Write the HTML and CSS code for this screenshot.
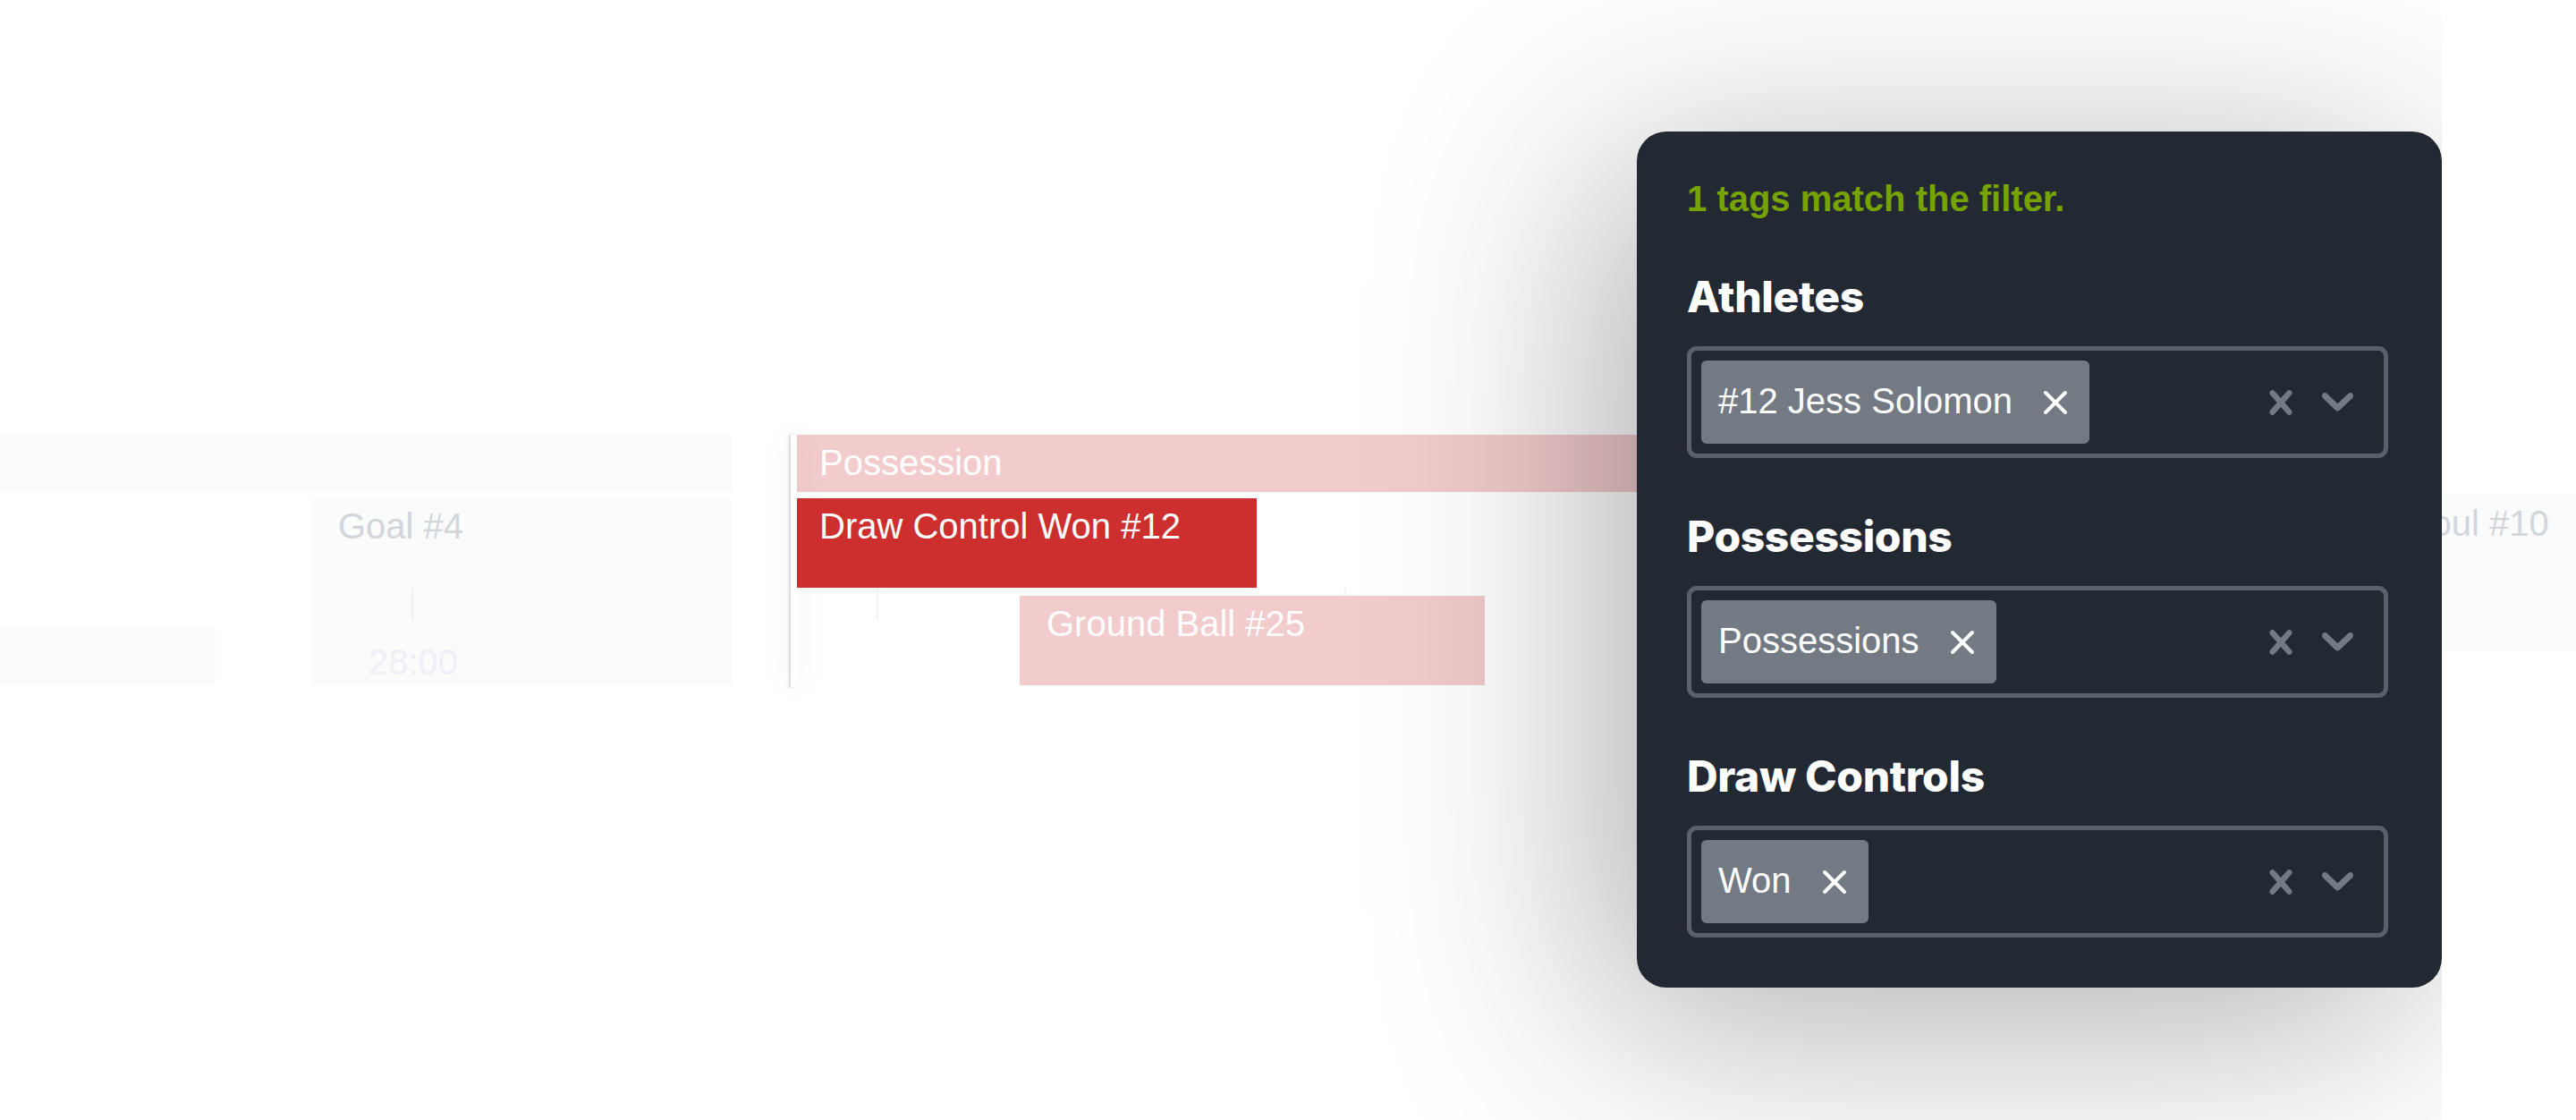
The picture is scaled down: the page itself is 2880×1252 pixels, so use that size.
FILE: index.html
```html
<!DOCTYPE html>
<html lang="en">
<head>
<meta charset="utf-8">
<title>Tag filter</title>
<link rel="stylesheet" href="styles.css">
</head>
<body>
<div class="stage">
  <div class="timeline">
    <div class="ev ghost row-top"></div>
    <div class="ev ghost goal"><span class="ghost-label">Goal #4</span></div>
    <div class="ev ghost low-left"></div>
    <div class="ev ghost foul"><span class="ghost-label">Foul #10</span></div>
    <div class="tick t1"></div>
    <div class="time-label">28:00</div>
    <div class="tick t2"></div>
    <div class="tick t3"></div>
    <div class="ev faded possession">Possession</div>
    <div class="ev active draw">Draw Control Won #12</div>
    <div class="ev faded ground">Ground Ball #25</div>
    <div class="playhead"></div>
  </div>

  <div class="panel">
    <p class="count">1 tags match the filter.</p>

    <section class="field">
      <h3 class="field-title">Athletes</h3>
      <div class="select">
        <div class="values">
          <span class="chip"><span class="chip-label">#12 Jess Solomon</span>
            <svg class="chip-x" viewBox="0 0 28 28" width="28" height="28"><path d="M3 3L25 25M25 3L3 25"/></svg>
          </span>
        </div>
        <div class="indicators">
          <svg class="clear" viewBox="5.3 4.8 9.4 10.4" width="26" height="28"><path d="M14.348 14.849c-0.469 0.469-1.229 0.469-1.697 0l-2.651-3.030-2.651 3.029c-0.469 0.469-1.229 0.469-1.697 0-0.469-0.469-0.469-1.229 0-1.697l2.758-3.15-2.759-3.152c-0.469-0.469-0.469-1.228 0-1.697s1.228-0.469 1.697 0l2.652 3.031 2.651-3.031c0.469-0.469 1.228-0.469 1.697 0s0.469 1.229 0 1.697l-2.758 3.152 2.758 3.15c0.469 0.469 0.469 1.229 0 1.698z"/></svg>
          <svg class="chev" viewBox="4.19 7.2 11.62 6.95" width="35" height="21"><path d="M4.516 7.548c0.436-0.446 1.043-0.481 1.576 0l3.908 3.747 3.908-3.747c0.533-0.481 1.141-0.446 1.574 0 0.436 0.445 0.408 1.197 0 1.615-0.406 0.418-4.695 4.502-4.695 4.502-0.217 0.223-0.502 0.335-0.787 0.335s-0.57-0.112-0.789-0.335c0 0-4.287-4.084-4.695-4.502s-0.436-1.170 0-1.615z"/></svg>
        </div>
      </div>
    </section>

    <section class="field">
      <h3 class="field-title">Possessions</h3>
      <div class="select">
        <div class="values">
          <span class="chip"><span class="chip-label">Possessions</span>
            <svg class="chip-x" viewBox="0 0 28 28" width="28" height="28"><path d="M3 3L25 25M25 3L3 25"/></svg>
          </span>
        </div>
        <div class="indicators">
          <svg class="clear" viewBox="5.3 4.8 9.4 10.4" width="26" height="28"><path d="M14.348 14.849c-0.469 0.469-1.229 0.469-1.697 0l-2.651-3.030-2.651 3.029c-0.469 0.469-1.229 0.469-1.697 0-0.469-0.469-0.469-1.229 0-1.697l2.758-3.15-2.759-3.152c-0.469-0.469-0.469-1.228 0-1.697s1.228-0.469 1.697 0l2.652 3.031 2.651-3.031c0.469-0.469 1.228-0.469 1.697 0s0.469 1.229 0 1.697l-2.758 3.152 2.758 3.15c0.469 0.469 0.469 1.229 0 1.698z"/></svg>
          <svg class="chev" viewBox="4.19 7.2 11.62 6.95" width="35" height="21"><path d="M4.516 7.548c0.436-0.446 1.043-0.481 1.576 0l3.908 3.747 3.908-3.747c0.533-0.481 1.141-0.446 1.574 0 0.436 0.445 0.408 1.197 0 1.615-0.406 0.418-4.695 4.502-4.695 4.502-0.217 0.223-0.502 0.335-0.787 0.335s-0.57-0.112-0.789-0.335c0 0-4.287-4.084-4.695-4.502s-0.436-1.170 0-1.615z"/></svg>
        </div>
      </div>
    </section>

    <section class="field">
      <h3 class="field-title">Draw Controls</h3>
      <div class="select">
        <div class="values">
          <span class="chip"><span class="chip-label">Won</span>
            <svg class="chip-x" viewBox="0 0 28 28" width="28" height="28"><path d="M3 3L25 25M25 3L3 25"/></svg>
          </span>
        </div>
        <div class="indicators">
          <svg class="clear" viewBox="5.3 4.8 9.4 10.4" width="26" height="28"><path d="M14.348 14.849c-0.469 0.469-1.229 0.469-1.697 0l-2.651-3.030-2.651 3.029c-0.469 0.469-1.229 0.469-1.697 0-0.469-0.469-0.469-1.229 0-1.697l2.758-3.15-2.759-3.152c-0.469-0.469-0.469-1.228 0-1.697s1.228-0.469 1.697 0l2.652 3.031 2.651-3.031c0.469-0.469 1.228-0.469 1.697 0s0.469 1.229 0 1.697l-2.758 3.152 2.758 3.15c0.469 0.469 0.469 1.229 0 1.698z"/></svg>
          <svg class="chev" viewBox="4.19 7.2 11.62 6.95" width="35" height="21"><path d="M4.516 7.548c0.436-0.446 1.043-0.481 1.576 0l3.908 3.747 3.908-3.747c0.533-0.481 1.141-0.446 1.574 0 0.436 0.445 0.408 1.197 0 1.615-0.406 0.418-4.695 4.502-4.695 4.502-0.217 0.223-0.502 0.335-0.787 0.335s-0.57-0.112-0.789-0.335c0 0-4.287-4.084-4.695-4.502s-0.436-1.170 0-1.615z"/></svg>
        </div>
      </div>
    </section>
  </div>
</div>
</body>
</html>
```

FILE: styles.css
```css
html, body {
  margin: 0;
  padding: 0;
  background: #ffffff;
}

.stage {
  position: relative;
  width: 2880px;
  height: 1252px;
  overflow: hidden;
  background: #ffffff;
  font-family: "Liberation Sans", Arial, sans-serif;
}

/* ---------- timeline canvas ---------- */
.timeline {
  position: absolute;
  inset: 0;
}

.ev {
  position: absolute;
  box-sizing: border-box;
  font-size: 40px;
  line-height: 46px;
  padding-top: 8px;
  white-space: nowrap;
  overflow: hidden;
}

.ghost { background: #fafbfb; }
.ghost-label { color: #d2d6db; }

.row-top   { left: 0;      top: 486px; width: 818px; height: 64px; }
.goal      { left: 347px;  top: 557px; width: 471px; height: 209px; padding-left: 31px; }
.low-left  { left: 0;      top: 702px; width: 241px; height: 64px; }
.foul      { left: 2600px; top: 552px; width: 290px; height: 176px; padding-left: 94px; padding-top: 10px; }

.tick {
  position: absolute;
  width: 2px;
  height: 35px;
  top: 658px;
  background: #eef1f7;
}
.t1 { left: 460px; background: #eceff5; }
.t2 { left: 980px; }
.t3 { left: 1503px; }

.time-label {
  position: absolute;
  left: 412px;
  top: 717px;
  font-size: 40px;
  line-height: 46px;
  color: #eef0f8;
}

.faded {
  background: #f2cbcc;
  color: #ffffff;
}
.active {
  background: #cd2f2f;
  color: #ffffff;
}

.possession { left: 891px;  top: 486px; width: 1400px; height: 64px;  padding-left: 25px; }
.draw       { left: 891px;  top: 557px; width: 514px;  height: 100px; padding-left: 25px; }
.ground     { left: 1140px; top: 666px; width: 520px;  height: 100px; padding-left: 30px; }

.playhead {
  position: absolute;
  left: 884px;
  top: 486px;
  width: 7px;
  height: 282px;
  background: #ffffff;
  box-shadow: -2px 0 3px rgba(0, 0, 0, 0.16), 0 0 36px rgba(0, 0, 0, 0.1);
  z-index: 1;
}

/* ---------- filter panel ---------- */
.panel {
  position: absolute;
  left: 1830px;
  top: 147px;
  width: 900px;
  box-sizing: border-box;
  padding: 52px 60px 56px 56px;
  background: #232932;
  border-radius: 33px;
  box-shadow: -40px 40px 320px rgba(0, 0, 0, 0.32);
  clip-path: inset(-600px 0 -600px -600px);
  z-index: 2;
}

.count {
  margin: 0 0 58px;
  font-family: "Liberation Sans", Arial, sans-serif;
  font-weight: 700;
  font-size: 40px;
  line-height: 46px;
  color: #76a300;
}

.field + .field { margin-top: 59px; }

.field-title {
  margin: 0 0 26px;
  font-family: Inter, "Open Sans", sans-serif;
  font-weight: 800;
  font-size: 48px;
  line-height: 58px;
  letter-spacing: -0.4px;
  color: #ffffff;
}

.select {
  box-sizing: border-box;
  height: 125px;
  border: 5px solid #58626e;
  border-radius: 11px;
  padding: 0 11px;
  display: flex;
  align-items: center;
}

.values {
  flex: 1;
  display: flex;
  align-items: center;
}

.chip {
  height: 93px;
  box-sizing: border-box;
  display: inline-flex;
  align-items: center;
  gap: 34px;
  padding: 0 24px 0 19px;
  background: #737a84;
  border-radius: 6px;
  color: #ffffff;
  font-size: 40px;
  line-height: 46px;
}

.chip-label {
  position: relative;
  top: -2px;
}

.chip-x {
  display: block;
  stroke: #ffffff;
  stroke-width: 4;
  stroke-linecap: round;
  fill: none;
}

.indicators {
  display: flex;
  align-items: center;
  gap: 33px;
  margin-right: 23px;
}

.clear {
  display: block;
  fill: #737a84;
}

.chev {
  display: block;
  fill: #737a84;
}
```
